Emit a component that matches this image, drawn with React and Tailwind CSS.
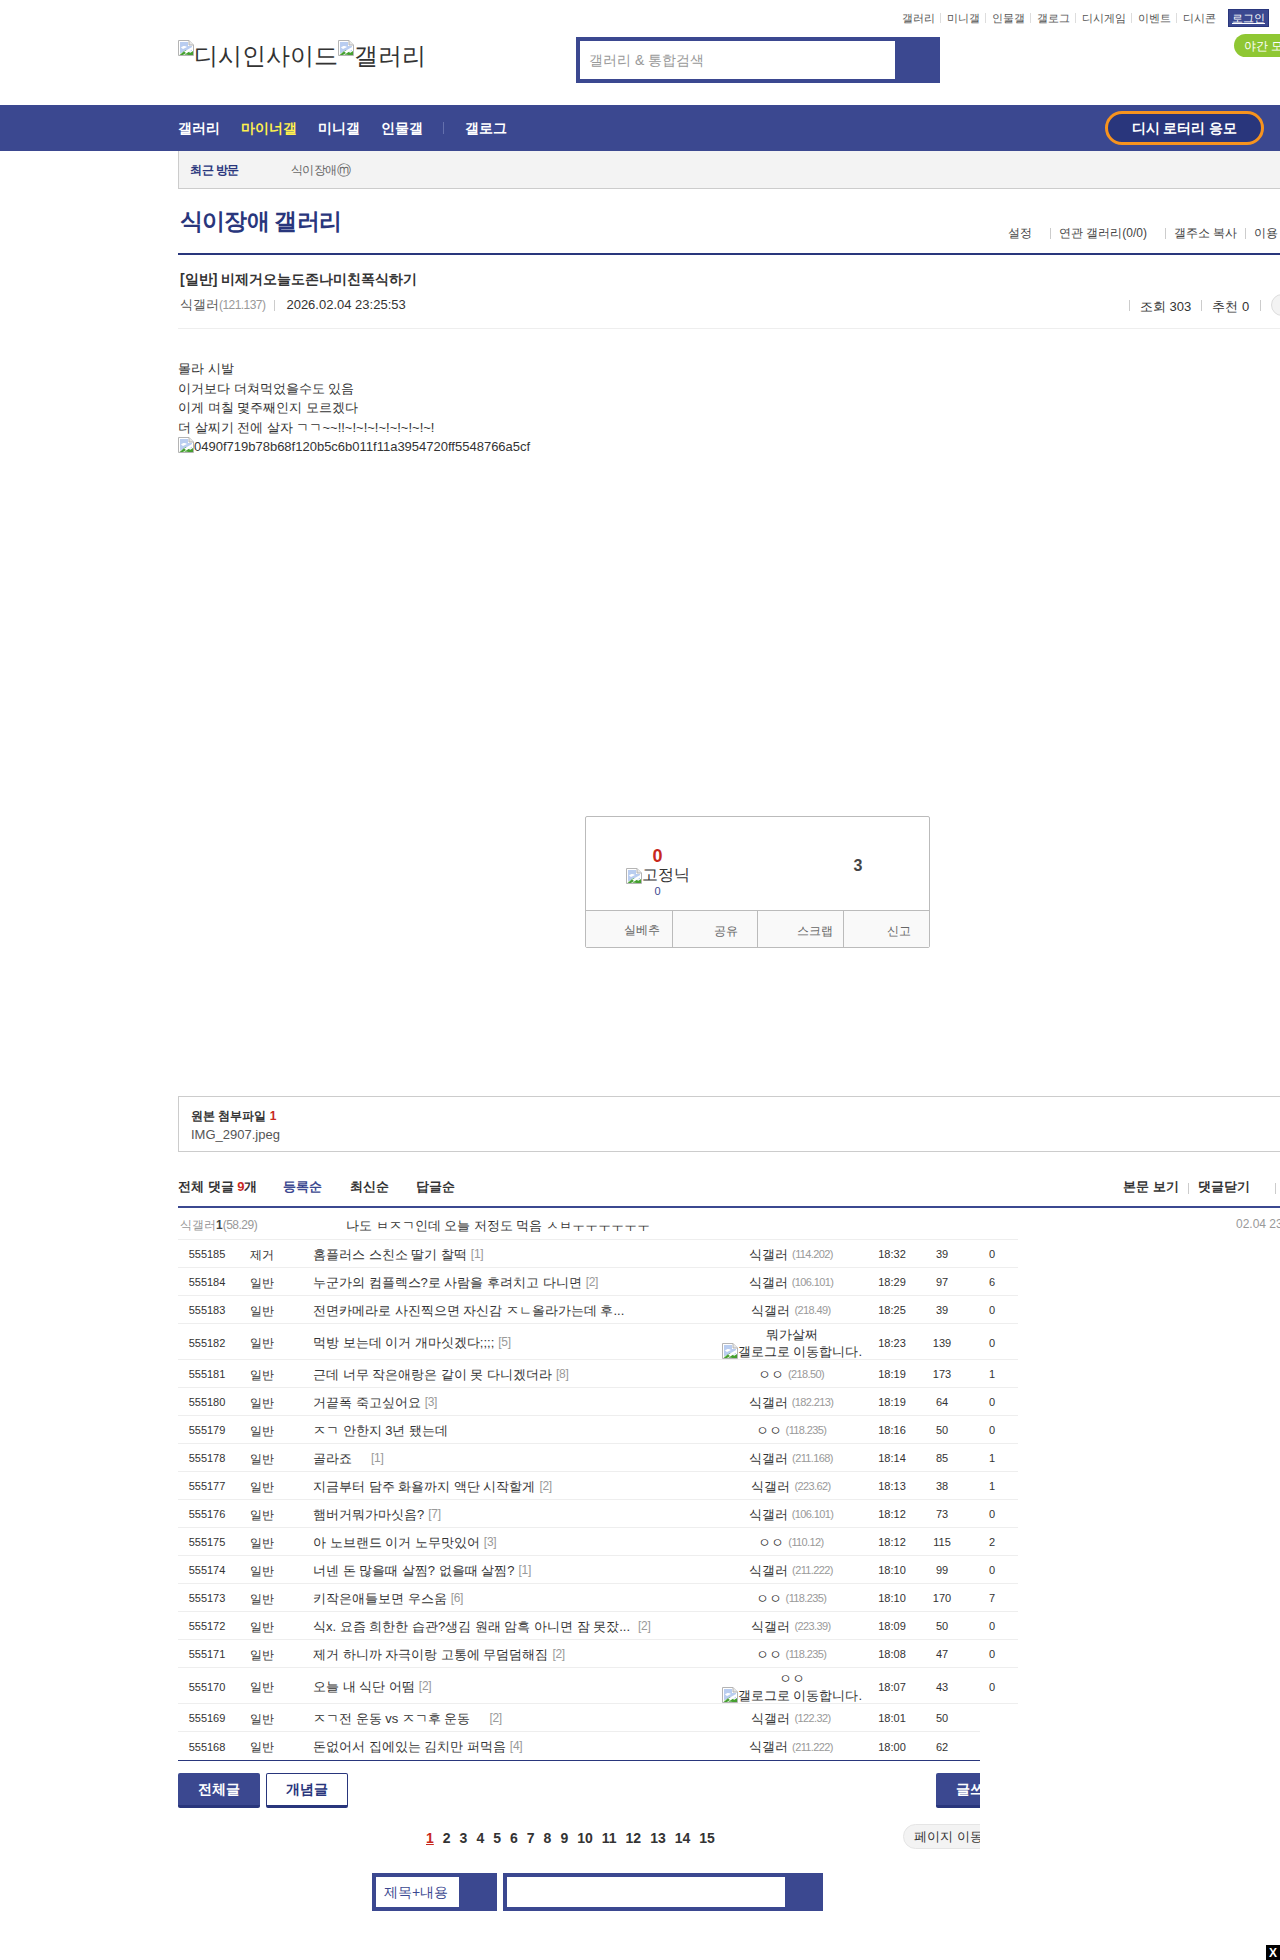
import React from "react";

function Broken({ className = "" }) {
  return (
    <svg width="16" height="16" viewBox="0 0 16 16" className={"inline-block shrink-0 " + className}>
      <path d="M0.5 0.5H11L15.5 5V15.5H0.5Z" fill="#fff" stroke="#b4b4b4" />
      <path d="M11 0.5V5H15.5" fill="#e8e8e8" stroke="#b4b4b4" />
      <path d="M2 2H10V6H14V11L2 13Z" fill="#b9cdf0" />
      <path d="M3 7.5C5 5.5 7 5.5 9 7L5 9Z" fill="#fff" />
      <path d="M2 14L8 10L14 14V14.8H2Z" fill="#45a030" />
      <path d="M1 14.5L15 6.5V9L6 15H1Z" fill="#fff" />
      <path d="M1.5 15L6 11.5L8 13L5 15Z" fill="#45a030" />
      <path d="M9 15L15 11V15Z" fill="#45a030" />
    </svg>
  );
}

const topLinks = ["갤러리", "미니갤", "인물갤", "갤로그", "디시게임", "이벤트", "디시콘"];

const rows = [
  { n: "555185", c: "제거", t: "홈플러스 스친소 딸기 찰떡", r: "[1]", w: "식갤러", ip: "(114.202)", h: "18:32", v: "39", s: "0" },
  { n: "555184", c: "일반", t: "누군가의 컴플렉스?로 사람을 후려치고 다니면", r: "[2]", w: "식갤러", ip: "(106.101)", h: "18:29", v: "97", s: "6" },
  { n: "555183", c: "일반", t: "전면카메라로 사진찍으면 자신감 ㅈㄴ올라가는데 후...", r: "", w: "식갤러", ip: "(218.49)", h: "18:25", v: "39", s: "0" },
  { n: "555182", c: "일반", t: "먹방 보는데 이거 개마싯겠다;;;;", r: "[5]", w: "뭐가살쩌", ip: "", h: "18:23", v: "139", s: "0", tall: true },
  { n: "555181", c: "일반", t: "근데 너무 작은애랑은 같이 못 다니겠더라", r: "[8]", w: "ㅇㅇ", ip: "(218.50)", h: "18:19", v: "173", s: "1" },
  { n: "555180", c: "일반", t: "거끝폭 죽고싶어요", r: "[3]", w: "식갤러", ip: "(182.213)", h: "18:19", v: "64", s: "0" },
  { n: "555179", c: "일반", t: "ㅈㄱ 안한지 3년 됐는데", r: "", w: "ㅇㅇ", ip: "(118.235)", h: "18:16", v: "50", s: "0" },
  { n: "555178", c: "일반", t: "골라죠", r: "[1]", gap: true, w: "식갤러", ip: "(211.168)", h: "18:14", v: "85", s: "1" },
  { n: "555177", c: "일반", t: "지금부터 담주 화욜까지 액단 시작할게", r: "[2]", w: "식갤러", ip: "(223.62)", h: "18:13", v: "38", s: "1" },
  { n: "555176", c: "일반", t: "햄버거뭐가마싯음?", r: "[7]", w: "식갤러", ip: "(106.101)", h: "18:12", v: "73", s: "0" },
  { n: "555175", c: "일반", t: "아 노브랜드 이거 노무맛있어", r: "[3]", w: "ㅇㅇ", ip: "(110.12)", h: "18:12", v: "115", s: "2" },
  { n: "555174", c: "일반", t: "너넨 돈 많을때 살찜? 없을때 살찜?", r: "[1]", w: "식갤러", ip: "(211.222)", h: "18:10", v: "99", s: "0" },
  { n: "555173", c: "일반", t: "키작은애들보면 우스움", r: "[6]", w: "ㅇㅇ", ip: "(118.235)", h: "18:10", v: "170", s: "7" },
  { n: "555172", c: "일반", t: "식x. 요즘 희한한 습관?생김 원래 암흑 아니면 잠 못잤...", r: "[2]", w: "식갤러", ip: "(223.39)", h: "18:09", v: "50", s: "0", smallGap: true },
  { n: "555171", c: "일반", t: "제거 하니까 자극이랑 고통에 무덤덤해짐", r: "[2]", w: "ㅇㅇ", ip: "(118.235)", h: "18:08", v: "47", s: "0" },
  { n: "555170", c: "일반", t: "오늘 내 식단 어떰", r: "[2]", w: "ㅇㅇ", ip: "", h: "18:07", v: "43", s: "0", tall: true },
];
const lastRows = [
  { n: "555169", c: "일반", t: "ㅈㄱ전 운동 vs ㅈㄱ후 운동", r: "[2]", gap: true, w: "식갤러", ip: "(122.32)", h: "18:01", v: "50", s: "" },
  { n: "555168", c: "일반", t: "돈없어서 집에있는 김치만 퍼먹음", r: "[4]", w: "식갤러", ip: "(211.222)", h: "18:00", v: "62", s: "" },
];

function Row({ d, last }) {
  return (
    <div
      className={
        "grid w-[840px] shrink-0 grid-cols-[58px_51px_431px_148px_52px_48px_52px] items-center pt-[2px] text-[#333] " +
        (d.tall ? "h-[36px] " : "h-[28px] ") +
        (last ? "" : "border-b border-[#eee]")
      }
    >
      <div className="text-center text-[11px]">{d.n}</div>
      <div className="text-center text-[12px]">{d.c}</div>
      <div className="flex items-center whitespace-nowrap pl-[26px] text-[13px]">
        <span>{d.t}</span>
        {d.r && (
          <span className={"relative top-[-1px] text-[12px] tracking-[-0.3px] text-[#999] " + (d.gap ? "ml-[19px]" : d.smallGap ? "ml-[8px]" : "ml-[4px]")}>
            {d.r}
          </span>
        )}
      </div>
      {d.tall ? (
        <div className="flex flex-col items-center text-[13px] leading-[17px]">
          <span>{d.w}</span>
          <span className="flex items-start whitespace-nowrap">
            <Broken />
            갤로그로 이동합니다.
          </span>
        </div>
      ) : (
        <div className="flex items-center justify-center whitespace-nowrap pr-[2px] text-[13px]">
          <span>{d.w}</span>
          <span className="ml-[4px] text-[11px] tracking-[-0.6px] text-[#999]">{d.ip}</span>
        </div>
      )}
      <div className="text-center text-[11px]">{d.h}</div>
      <div className="text-center text-[11px]">{d.v}</div>
      <div className="text-center text-[11px]">{d.s}</div>
    </div>
  );
}

const pages = ["2", "3", "4", "5", "6", "7", "8", "9", "10", "11", "12", "13", "14", "15"];

export default function App() {
  return (
    <div className="relative h-[1960px] w-[1280px] overflow-hidden bg-white text-[#333] [font-family:'Liberation_Sans',sans-serif]">
      {/* header */}
      <header className="h-[105px]">
        <div className="flex h-[34px] items-start justify-end pr-[11px] pt-[9px]">
          <nav className="flex h-[18px] items-center text-[11px] text-[#555]">
            {topLinks.map((l, i) => (
              <React.Fragment key={l}>
                {i > 0 && <span className="ml-[5px] mr-[6px] h-[10px] w-px bg-[#ddd]" />}
                <span>{l}</span>
              </React.Fragment>
            ))}
          </nav>
          <span className="ml-[12px] flex h-[18px] w-[41px] shrink-0 items-center justify-center border border-[#29367c] bg-[#3b4890] text-[11px] text-white underline">
            로그인
          </span>
        </div>
        <div className="flex items-start pl-[178px]">
          <div className="mt-[6px] flex h-[32px] w-[398px] shrink-0 items-start text-[24px] leading-[32px] text-[#333]">
            <Broken />
            <span>디시인사이드</span>
            <Broken />
            <span>갤러리</span>
          </div>
          <div className="mt-[3px] flex h-[46px] w-[364px] shrink-0 border-[4px] border-[#3b4890] bg-[#3b4890]">
            <div className="flex h-full w-[315px] items-center bg-white pl-[9px] text-[14px] text-[#999]">
              갤러리 &amp; 통합검색
            </div>
          </div>
          <div className="ml-[294px] flex h-[23px] w-[80px] shrink-0 items-center rounded-full bg-[#8fc733] pl-[10px] text-[12px] text-white">
            야간 모드
          </div>
        </div>
      </header>

      {/* nav */}
      <nav className="flex h-[46px] items-center bg-[#3b4890] pl-[178px] pr-[16px] text-[14px] font-bold text-white">
        <span>갤러리</span>
        <span className="ml-[21px] text-[#fff04d]">마이너갤</span>
        <span className="ml-[21px]">미니갤</span>
        <span className="ml-[21px]">인물갤</span>
        <span className="ml-[20px] h-[12px] w-px bg-[#6470ad]" />
        <span className="ml-[21px]">갤로그</span>
        <span className="ml-auto flex h-[34px] w-[159px] shrink-0 items-center justify-center rounded-full border-[3px] border-[#f7931e] bg-[#29367c]">
          디시 로터리 응모
        </span>
      </nav>

      <main className="pl-[178px]">
        {/* recent */}
        <div className="flex h-[38px] w-[1200px] items-center border-b border-l border-[#ccc] bg-[#f3f3f3] pl-[11px] text-[12px]">
          <span className="font-bold tracking-[-0.5px] text-[#29367c]">최근 방문</span>
          <span className="ml-[52px] flex items-center tracking-[-0.5px] text-[#666]">
            식이장애<span className="text-[14px] leading-[14px]">ⓜ</span>
          </span>
        </div>

        {/* title */}
        <div className="flex h-[66px] w-[1200px] items-start border-b-2 border-[#29367c]">
          <div className="w-[830px] shrink-0 pl-[2px] pt-[14px]">
            <h1 className="text-[23px] font-bold leading-[36px] tracking-[-0.8px] text-[#29367c]">식이장애 갤러리</h1>
          </div>
          <div className="mt-[35px] flex shrink-0 items-center whitespace-nowrap text-[12px] text-[#444]">
            <span>설정</span>
            <span className="ml-[18px] mr-[8px] h-[11px] w-px bg-[#ccc]" />
            <span>연관 갤러리(0/0)</span>
            <span className="ml-[18px] mr-[8px] h-[11px] w-px bg-[#ccc]" />
            <span>갤주소 복사</span>
            <span className="mx-[8px] h-[11px] w-px bg-[#ccc]" />
            <span>이용</span>
          </div>
        </div>

        {/* post head */}
        <div className="h-[74px] w-[1200px] border-b border-[#eee] pl-[2px]">
          <h2 className="pt-[14px] text-[14px] font-bold leading-[20px] text-[#333]">[일반] 비제거오늘도존나미친폭식하기</h2>
          <div className="mt-[6px] flex h-[20px] items-center text-[13px]">
            <div className="flex w-[949px] shrink-0 items-center">
              <span className="text-[#555]">식갤러</span>
              <span className="text-[12px] tracking-[-0.55px] text-[#999]">(121.137)</span>
              <span className="ml-[9px] mr-[11px] h-[11px] w-px bg-[#ccc]" />
              <span className="text-[#333]">2026.02.04 23:25:53</span>
            </div>
            <span className="mr-[10px] h-[11px] w-px shrink-0 bg-[#ccc]" />
            <span className="mt-[3px] whitespace-nowrap">조회 303</span>
            <span className="mx-[10px] h-[11px] w-px shrink-0 bg-[#ccc]" />
            <span className="mt-[3px] whitespace-nowrap">추천 0</span>
            <span className="ml-[11px] mr-[10px] h-[11px] w-px shrink-0 bg-[#ccc]" />
            <span className="h-[22px] w-[22px] shrink-0 rounded-full border border-[#ddd] bg-[#f3f3f3]" />
          </div>
        </div>

        {/* body */}
        <div className="h-[487px] pt-[30px] text-[13px] leading-[19.5px] text-[#333]">
          <p>몰라 시발</p>
          <p>이거보다 더쳐먹었을수도 있음</p>
          <p>이게 며칠 몇주째인지 모르겠다</p>
          <p>더 살찌기 전에 살자 ㄱㄱ~~!!~!~!~!~!~!~!~!~!</p>
          <p className="flex items-start">
            <Broken />
            0490f719b78b68f120b5c6b011f11a3954720ff5548766a5cf
          </p>
        </div>

        {/* recommend */}
        <div className="ml-[407px] h-[132px] w-[345px] rounded-[2px] border border-[#bbb]">
          <div className="flex h-[94px] border-b border-[#bbb]">
            <div className="flex w-[143px] flex-col items-center pt-[27px]">
              <span className="text-[18px] font-bold leading-[24px] text-[#c8281e]">0</span>
              <span className="flex h-[16px] items-start text-[16px] leading-[14px] text-[#333]">
                <Broken />
                고정닉
              </span>
              <span className="text-[11px] leading-[14px] text-[#3b4890]">0</span>
            </div>
            <div className="ml-[114px] w-[30px] pt-[37px] text-center text-[16px] font-bold leading-[24px] text-[#444]">3</div>
          </div>
          <div className="flex h-[36px] bg-[#f9f9f9] text-[12px] text-[#666]">
            <div className="flex w-[86px] items-center pl-[38px] pt-[2px]">실베추</div>
            <div className="flex w-[86px] items-center border-l border-[#bbb] pl-[41px] pt-[3px]">공유</div>
            <div className="flex w-[86px] items-center border-l border-[#bbb] pl-[39px] pt-[3px]">스크랩</div>
            <div className="flex w-[86px] items-center border-l border-[#bbb] pl-[43px] pt-[3px]">신고</div>
          </div>
        </div>

        {/* attachment */}
        <div className="mt-[148px] h-[56px] w-[1200px] border border-[#ccc] pl-[12px] pt-[10px]">
          <div className="text-[12px] font-bold leading-[19px] text-[#333]">
            원본 첨부파일 <span className="text-[#c8281e]">1</span>
          </div>
          <div className="text-[13px] leading-[18px] text-[#555]">IMG_2907.jpeg</div>
        </div>

        {/* comment head */}
        <div className="flex h-[56px] w-[1200px] items-end border-b-2 border-[#3b4890] pb-[10px] text-[13px] font-bold text-[#333]">
          <div className="flex w-[945px] shrink-0">
            <span>
              전체 댓글 <span className="text-[#c8281e]">9</span>개
            </span>
            <span className="ml-[26px] text-[#3b4890]">등록순</span>
            <span className="ml-[28px]">최신순</span>
            <span className="ml-[27px]">답글순</span>
          </div>
          <span className="whitespace-nowrap">본문 보기</span>
          <span className="mx-[9px] mb-[2px] h-[11px] w-px bg-[#ccc]" />
          <span className="whitespace-nowrap">댓글닫기</span>
          <span className="ml-[25px] mb-[2px] h-[11px] w-px bg-[#ccc]" />
        </div>

        {/* comment */}
        <div className="flex h-[32px] w-[1200px] items-center">
          <div className="flex h-[32px] w-[840px] shrink-0 items-center border-b border-[#eee] pl-[2px] pt-[3px]">
            <span className="w-[166px] shrink-0 text-[12px] text-[#999]">
              식갤러<b className="text-[#444]">1</b>
              <span className="tracking-[-0.5px]">(58.29)</span>
            </span>
            <span className="pt-[2px] text-[13px] text-[#333]">나도 ㅂㅈㄱ인데 오늘 저정도 먹음 ㅅㅂㅜㅜㅜㅜㅜㅜ</span>
          </div>
          <span className="ml-[218px] whitespace-nowrap text-[12px] text-[#999]">02.04 23</span>
        </div>

        {/* list */}
        <div className="w-[840px]">
          {rows.map((d) => (
            <Row key={d.n} d={d} />
          ))}
        </div>
        <div className="w-[802px] overflow-hidden">
          <div className="border-b border-[#29367c]">
            {lastRows.map((d, i) => (
              <Row key={d.n} d={d} last={i === 1} />
            ))}
          </div>

          <div className="mt-[12px] flex h-[35px]">
            <div className="flex h-[35px] w-[82px] shrink-0 items-center justify-center rounded-[2px] border-b-[3px] border-[#29367c] bg-[#3b4890] text-[14px] font-bold text-white">
              전체글
            </div>
            <div className="ml-[6px] flex h-[35px] w-[82px] shrink-0 items-center justify-center rounded-[2px] border border-b-[3px] border-[#29367c] bg-white text-[14px] font-bold text-[#29367c]">
              개념글
            </div>
            <div className="ml-[588px] flex h-[35px] w-[82px] shrink-0 items-center justify-center rounded-[2px] border-b-[3px] border-[#29367c] bg-[#3b4890] text-[14px] font-bold text-white">
              글쓰기
            </div>
          </div>

          <div className="mt-[16px] flex h-[25px] items-center">
            <div className="ml-[248px] mt-[3px] flex w-[477px] shrink-0 items-center gap-[9px] text-[14px] font-bold text-[#333]">
              <span className="text-[#c8281e] underline">1</span>
              {pages.map((p) => (
                <span key={p}>{p}</span>
              ))}
            </div>
            <div className="flex h-[25px] w-[100px] shrink-0 items-center whitespace-nowrap rounded-full border border-[#e5e5e5] bg-[#f3f3f3] pl-[10px] text-[13px] text-[#333]">
              페이지 이동
            </div>
          </div>
        </div>

        {/* bottom search */}
        <div className="ml-[194px] mt-[24px] flex gap-[6px]">
          <div className="h-[38px] w-[125px] border-[4px] border-[#3b4890] bg-[#3b4890]">
            <div className="flex h-full w-[83px] items-center bg-white pl-[8px] pt-[1px] text-[14px] text-[#3b4890]">제목+내용</div>
          </div>
          <div className="h-[38px] w-[320px] border-[4px] border-[#3b4890] bg-[#3b4890]">
            <div className="h-full w-[278px] bg-white" />
          </div>
        </div>
      </main>

      <div className="absolute bottom-0 right-0 flex h-[15px] w-[14px] items-center justify-center bg-black text-[12px] font-bold text-white">
        X
      </div>
    </div>
  );
}
